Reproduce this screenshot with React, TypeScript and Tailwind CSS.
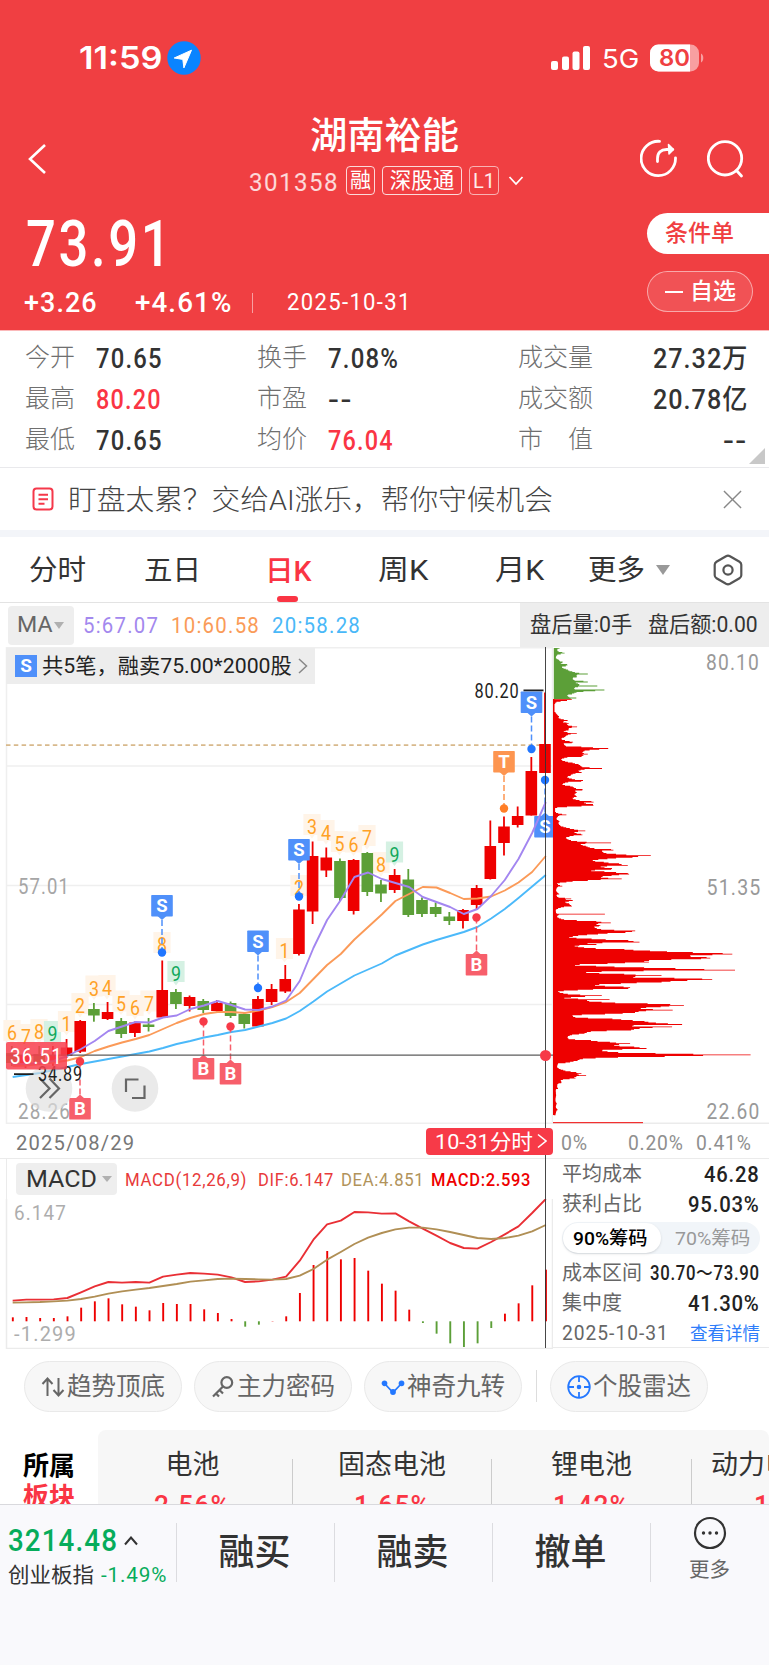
import { useLayoutEffect, useRef, useState } from "react";
import type { ReactNode } from "react";
import clsx from "clsx";

const FONT = "font-['Roboto','Noto_Sans_CJK_SC',sans-serif]";

const RED = "#ee0000";
const GREEN = "#5c9f38";

// [wick top, wick bottom, body top, body bottom, up?]
const candles: [number, number, number, number, boolean][] = [
  [1046, 1066, 1053, 1063, false],
  [1048, 1068, 1055, 1065, true],
  [1046, 1064, 1054, 1062, false],
  [1046, 1066, 1055, 1062, true],
  [1039, 1058, 1047.5, 1056, true],
  [1020, 1053, 1021, 1051.7, true],
  [1003, 1021.7, 1009, 1015.5, false],
  [1002, 1020, 1012, 1019, true],
  [1018, 1038, 1021, 1034, false],
  [1021.5, 1037, 1022.5, 1033, true],
  [1018, 1031.5, 1024.5, 1027, false],
  [960.5, 1017.5, 990, 1017.5, true],
  [989, 1009, 992, 1004, false],
  [995.5, 1011.5, 997, 1006, true],
  [999, 1013, 1001, 1010, false],
  [1000, 1011.5, 1003, 1011, true],
  [1001.5, 1018, 1003, 1016, false],
  [1012.5, 1028.5, 1014, 1024, false],
  [996, 1027, 999, 1026.5, true],
  [984, 1005, 989, 1002, true],
  [965, 993, 979, 991.5, true],
  [904, 955.5, 909.5, 954, true],
  [841.5, 924, 856, 911.5, true],
  [847.5, 877, 857.5, 870.5, true],
  [858.5, 901, 861, 898, false],
  [859, 914.5, 860, 911, true],
  [852, 896, 853, 892, false],
  [880, 902, 884.5, 893.5, false],
  [869, 893, 875, 890, true],
  [869, 917, 879.5, 915, false],
  [897.5, 917, 900, 914, false],
  [902.5, 917, 907, 914, false],
  [912, 925, 916.5, 921, false],
  [909, 928.5, 910, 921, true],
  [885, 909, 888, 905, true],
  [820.5, 879.5, 846, 879, true],
  [816.5, 855.5, 826.5, 843, true],
  [806.5, 827.5, 816, 825, true],
  [757, 815.5, 771, 815.5, true],
  [692.5, 773, 744, 773, true],
];

const ma5 = [
  1064, 1064, 1063, 1061, 1056, 1049, 1041, 1031, 1026.5, 1022, 1022.5, 1017.5, 1015.5, 1009,
  1005.5, 1001, 1005, 1009.5, 1010, 1006.5, 1000.5, 981, 948, 920, 900, 877, 872.5, 879, 883, 887,
  897, 902, 907, 914, 909, 896, 880, 859, 833, 802,
];
const ma10 = [
  1066, 1065.5, 1064, 1062.5, 1060.5, 1057, 1051, 1046.5, 1042.5, 1039, 1035, 1029, 1023, 1018,
  1014, 1012, 1012, 1013, 1010.5, 1007, 1002, 993, 979, 965, 954, 939.5, 927, 914.5, 901, 894, 887,
  887.5, 893, 899, 898.5, 896.5, 890.5, 882.5, 872, 856,
];
const ma20 = [
  1077, 1075, 1073, 1070, 1067, 1064, 1061.5, 1059, 1056.5, 1054, 1051.5, 1048, 1044, 1041, 1037.5,
  1035, 1032, 1030, 1026.5, 1023, 1018.5, 1011, 1001.5, 991.5, 983.5, 975.5, 969.5, 963.5, 955.5,
  950, 944.5, 940, 936, 932, 927, 918.5, 909, 898, 886.5, 875,
];

// Nine-turn counters: [x, y, digit]
const counters: [number, number, string][] = [
  [12, 1033, "6"],
  [26, 1037, "7"],
  [39, 1032, "8"],
  [52.5, 1034, "9"],
  [66.5, 1024, "1"],
  [80, 1006, "2"],
  [94, 988.5, "3"],
  [107, 988, "4"],
  [121, 1003.5, "5"],
  [135, 1008, "6"],
  [149, 1003.5, "7"],
  [162, 945, "8"],
  [176, 974, "9"],
  [284.5, 951, "1"],
  [299, 888, "2"],
  [312, 827, "3"],
  [326, 833, "4"],
  [339.5, 844, "5"],
  [353.5, 844.5, "6"],
  [367, 838, "7"],
  [381, 865, "8"],
  [394.5, 854.5, "9"],
];

type Trade = { x: number; top: number; dot: number; label: "S" | "B" | "T"; up?: boolean };

const trades: Trade[] = [
  { x: 162, top: 895, dot: 952.5, label: "S" },
  { x: 258, top: 930.5, dot: 988, label: "S" },
  { x: 299, top: 839, dot: 896.5, label: "S" },
  { x: 531.5, top: 691.5, dot: 749, label: "S" },
  { x: 504, top: 751, dot: 808.5, label: "T" },
  { x: 545, top: 816, dot: 780, label: "S", up: true },
  { x: 80, top: 1098, dot: 1061.5, label: "B", up: true },
  { x: 203.5, top: 1058, dot: 1021.5, label: "B", up: true },
  { x: 230.5, top: 1063, dot: 1026.5, label: "B", up: true },
  { x: 476.5, top: 954, dot: 917.5, label: "B", up: true },
];

const tradeColors = {
  S: ["#4f90fa", "#2176ff"],
  T: ["#fd9550", "#ff7e26"],
  B: ["#f75f6b", "#f73a48"],
};

// Chip distribution, alternating y and bar length in thirds of a pixel
const chipsGreen = [
  24, 17, 28, 10, 32, 12, 37, 32, 40, 34, 42, 12, 52, 6, 58, 15, 62, 18, 66, 34, 69, 20, 72, 40, 76, 42,
  80, 24, 88, 42, 95, 62, 98, 72, 100, 147, 102, 72, 106, 68, 110, 71, 114, 56, 120, 62, 124, 129,
  127, 66, 131, 80, 134, 74, 137, 138, 140, 66, 146, 60, 149, 164, 152, 120, 156, 68, 160, 60, 165,
  40, 170, 46, 174, 87, 177, 26,
];
const chipsRed = [
  178, 54, 182, 36, 184, 10, 190, 4, 191, 0, 214, 0, 216, 5, 222, 10, 228, 16, 232, 14, 238, 30, 241,
  47, 244, 26, 249, 48, 253, 40, 258, 60, 260, 75, 264, 45, 270, 44, 274, 30, 279, 72, 283, 44, 290,
  34, 296, 22, 304, 56, 307, 66, 310, 30, 317, 36, 320, 96, 324, 171, 327, 136, 332, 92, 337, 86, 341,
  104, 344, 86, 348, 96, 351, 40, 358, 22, 364, 40, 368, 60, 373, 78, 380, 86, 384, 160, 387, 92,
  392, 74, 397, 86, 400, 60, 406, 50, 410, 40, 416, 56, 422, 111, 425, 44, 432, 26, 438, 56, 444,
  66, 448, 105, 452, 64, 457, 70, 462, 62, 468, 70, 474, 56, 480, 76, 484, 146, 488, 90, 494, 138,
  498, 80, 501, 26, 503, 4, 514, 4, 519, 14, 523, 46, 527, 14, 536, 8, 542, 18, 548, 14, 556, 20, 561,
  36, 566, 60, 572, 99, 576, 62, 583, 96, 587, 56, 592, 36, 598, 44, 603, 72, 608, 188, 611, 80,
  618, 100, 623, 112, 628, 210, 632, 144, 637, 150, 642, 200, 646, 291, 651, 236, 656, 160, 661,
  116, 665, 150, 670, 196, 675, 224, 679, 140, 686, 195, 691, 110, 695, 180, 700, 249, 705, 190,
  710, 140, 716, 212, 720, 112, 725, 40, 730, 10, 737, 27, 741, 10, 750, 7, 761, 17, 765, 8, 770,
  12, 775, 60, 778, 36, 781, 67, 785, 34, 790, 46, 797, 57, 802, 21, 809, 6, 818, 7, 820, 15, 821,
  182, 823, 16, 829, 10, 838, 31, 842, 126, 848, 177, 851, 126, 856, 148, 860, 121, 865, 131, 872,
  257, 876, 226, 882, 130, 887, 70, 891, 46, 895, 111, 900, 223, 905, 269, 910, 101, 913, 141, 916,
  61, 922, 91, 927, 221, 933, 330, 938, 504, 942, 551, 947, 401, 952, 495, 956, 441, 962, 270, 966,
  293, 970, 161, 974, 58, 978, 161, 982, 271, 985, 411, 989, 581, 992, 261, 996, 96, 1001, 211, 1006,
  323, 1010, 226, 1013, 361, 1017, 544, 1020, 411, 1026, 321, 1030, 201, 1034, 121, 1040, 221, 1044,
  249, 1048, 101, 1054, 13, 1060, 36, 1066, 144, 1069, 91, 1073, 31, 1078, 167, 1081, 96, 1086, 161,
  1091, 341, 1095, 395, 1100, 320, 1104, 260, 1109, 366, 1113, 261, 1118, 241, 1121, 161, 1126, 56,
  1130, 61, 1136, 191, 1142, 271, 1148, 311, 1152, 420, 1156, 216, 1160, 384, 1164, 261, 1170, 231,
  1174, 111, 1180, 91, 1185, 51, 1190, 41, 1196, 45, 1200, 111, 1205, 168, 1210, 229, 1215, 181,
  1220, 251, 1225, 285, 1230, 141, 1235, 171, 1240, 391, 1244, 632, 1249, 326, 1252, 161, 1256, 86,
  1261, 71, 1267, 46, 1270, 13, 1280, 10, 1290, 31, 1295, 60, 1298, 89, 1302, 70, 1306, 97, 1310, 61,
  1314, 67, 1320, 21, 1327, 25, 1332, 11, 1340, 10, 1344, 14, 1348, 6, 1366, 7, 1380, 5, 1390, 9, 1400, 6,
  1408, 13, 1412, 8, 1426, 5,
];

const macdBars = [
  499, 498, 501, 501, 496, 470, 451, 442, 460, 467, 478, 456, 459, 459, 475, 486, 504, 527, 521, 510,
  496, 426, 342, 300, 325, 321, 359, 398, 419, 476, 516, 548, 577, 588, 577, 531, 488, 457, 403, 356,
];
const dif = [
  449, 446, 446, 445, 441, 424, 406, 393, 395, 393, 395, 377, 371, 366, 368, 371, 379, 393, 391, 386,
  377, 329, 266, 220, 209, 183, 184, 188, 187, 211, 233, 254, 276, 291, 293, 273, 250, 226, 186, 144,
];
const dea = [
  455, 454, 453, 451, 449, 444, 437, 428, 421, 416, 411, 405, 399, 392, 388, 384, 383, 384, 385, 386,
  384, 374, 354, 326, 303, 279, 260, 246, 235, 230, 230, 235, 243, 252, 261, 264, 261, 254, 241, 222,
];

const barX = (i: number) => 545 - 13.67 * (39 - i);
const macdY = (v: number) => 1150 + v / 3;
const toPoints = (ys: number[]) => ys.map((y, i) => `${barX(i) + 0.8},${y}`).join(" ");

// Stepped outline with one price level every 0.8px; long levels stay thin
function chipPath(flat: number[]) {
  const last = flat[flat.length - 2];
  let d = `M0.8 ${640 + flat[0] / 3}`;
  let k = 0;
  for (let y = flat[0]; y < last; y += 2.4) {
    while (flat[k + 2] < y) k += 2;
    const [y0, v0, y1, v1] = flat.slice(k, k + 4);
    const t = (y - y0) / (y1 - y0);
    const near = v1 > v0 ? t : 1 - t;
    const length = Math.min(v0, v1) + Math.abs(v1 - v0) * near ** 1.8;
    d += `H${(0.8 + length / 3).toFixed(1)}V${(640 + (y + 2.4) / 3).toFixed(1)}`;
  }
  return `${d}H0.8z`;
}

// Stretches or squeezes its text horizontally so that it fills the given width
function Fit({ className, children }: { className: string; children: ReactNode }) {
  const box = useRef<HTMLSpanElement>(null);
  const text = useRef<HTMLSpanElement>(null);
  const [scale, setScale] = useState(1);

  useLayoutEffect(() => {
    if (box.current && text.current) {
      setScale(box.current.clientWidth / text.current.offsetWidth);
    }
  }, []);

  return (
    <span ref={box} className={clsx("block shrink-0 whitespace-nowrap", className)}>
      <span
        ref={text}
        className="inline-block origin-left"
        style={{ transform: `scaleX(${scale})` }}
      >
        {children}
      </span>
    </span>
  );
}

function StatusBar() {
  return (
    <div className="flex h-[115px] items-center pl-[79px]">
      <Fit className="w-[83px] font-['Inter'] text-[31px] leading-10 font-semibold">11:59</Fit>
      <svg className="ml-[5px] size-[34px]" viewBox="0 0 34 34">
        <circle cx="17" cy="17" r="16.7" fill="#0a84ff" />
        <path d="M24.5 9.2 7.2 17l8.6 1.4 1.1 8.5z" fill="#fff" stroke="#fff" strokeLinejoin="round" />
      </svg>
      <svg className="ml-[350px] h-6 w-10" viewBox="0 0 40 24" fill="#fff">
        <rect x="0" y="15" width="7" height="9" rx="2" />
        <rect x="11" y="10.5" width="7" height="13.5" rx="2" />
        <rect x="21.5" y="5.5" width="7" height="18.5" rx="2" />
        <rect x="32" y="0" width="7" height="24" rx="2" />
      </svg>
      <Fit className="ml-[11px] w-[37px] pt-[2px] font-['Inter'] text-[26px] leading-10">5G</Fit>
      <svg className="ml-[11px] h-[28px] w-[54px]" viewBox="0 0 54 28">
        <rect x="0" y=".5" width="49" height="27" rx="8.5" fill="#fff" fillOpacity=".5" />
        <path d="M8.5.5H40v27H8.5A8.5 8.5 0 0 1 0 19V9A8.5 8.5 0 0 1 8.5.5z" fill="#fff" />
        <path d="M51 9.500c3 1 3 8 0 9z" fill="#fff" fillOpacity=".5" />
        <text
          x="9"
          y="22"
          textLength="31"
          lengthAdjust="spacingAndGlyphs"
          className="font-['Inter'] text-[22.500px] font-semibold"
          fill="#ef4042"
        >
          80
        </text>
      </svg>
    </div>
  );
}

function Header() {
  return (
    <header className="h-[331px] border-b border-[#fbb9ba] bg-[#f03f42] text-white">
      <StatusBar />
      <div className="flex h-[88px] items-start">
        <svg className="mt-7 ml-[27px] h-8 w-5" viewBox="0 0 20 32" fill="none" stroke="#fff" strokeWidth="2.600">
          <path d="M18 2 3 16l15 14" />
        </svg>
        <div className="ml-[202px] w-[276px] pt-px">
          <Fit className="ml-[61px] w-[149px] text-[37px] leading-[42px] font-medium">湖南裕能</Fit>
          <div className="mt-[8px] flex h-[29px] items-center">
            <Fit className="w-[90px] pt-[2px] text-[26.500px] leading-7 tracking-[.06em] text-white/80">301358</Fit>
            <div className="ml-[7px] flex h-[29px] w-[29px] items-center justify-center rounded border border-white/80 pt-px text-[21px]">
              融
            </div>
            <div className="ml-[7px] flex h-[29px] w-[80px] items-center justify-center rounded border border-white/80 pt-px text-[21.500px]">
              深股通
            </div>
            <div className="ml-[7px] flex h-[29px] w-[30px] items-center justify-center rounded border border-white/60 text-[20px] text-white/90">
              L1
            </div>
            <svg className="ml-[9px] h-3 w-4" viewBox="0 0 16 12" fill="none" stroke="#fff" strokeWidth="1.800">
              <path d="m1.500 2 6.500 7 6.500-7" />
            </svg>
          </div>
        </div>
        <svg className="mt-[24px] ml-[115px] size-10" viewBox="0 0 40 40" fill="none" stroke="#fff" strokeWidth="2.800">
          <path d="M19.500 2.300A17.200 17.200 0 1 0 35.500 18.800" strokeLinecap="round" />
          <path d="M17.500 22.500v-3c0-6 3.500-9 9-9h6" strokeLinecap="round" />
          <path d="m28.500 5.500 5 5-4.500 4.500z" fill="#fff" strokeWidth="1.500" strokeLinejoin="round" />
        </svg>
        <svg className="mt-[25px] ml-[27px] size-10" viewBox="0 0 40 40" fill="none" stroke="#fff" strokeWidth="2.800">
          <circle cx="18" cy="18.300" r="16.700" />
          <path d="m29.500 30.500 5 5.500" strokeLinecap="round" />
        </svg>
      </div>
      <div className="flex justify-between">
        <div>
          <Fit className="mt-[8px] ml-[26px] w-[147px] text-[64px] leading-[68px] font-medium tracking-[.05em]">73.91</Fit>
          <div className="mt-[9px] flex h-[30px] items-center">
            <Fit className="ml-[24px] w-[74px] text-[28px] font-medium tracking-[.04em]">+3.26</Fit>
            <Fit className="ml-[37px] w-[97px] text-[28px] font-medium tracking-[.04em]">+4.61%</Fit>
            <div className="ml-[20px] h-5 w-px bg-white/50" />
            <Fit className="ml-[34px] w-[125px] text-[23.500px] tracking-[.06em]">2025-10-31</Fit>
          </div>
        </div>
        <div className="mt-[10px] w-[122px]">
          <div className="flex h-[41px] items-center rounded-l-full bg-white pt-[2px] pl-[18px] text-[23px] font-medium text-[#f03f42]">
            条件单
          </div>
          <div className="mt-[17px] flex h-[41px] w-[106px] items-center rounded-full border border-white/50 bg-white/10 pt-px pl-[17px] text-[23px] font-medium">
            <div className="mr-[7px] h-[2px] w-[18px] bg-white" />
            自选
          </div>
        </div>
      </div>
    </header>
  );
}

function Stats() {
  return (
    <section className="relative flex h-[137px] border-b border-[#e9e9ec] pt-[6px] text-[27px] leading-[41px] font-medium text-[#333]">
      <div className="ml-[25px] w-[71px] text-[25px] font-light text-[#6f6f6f]">
        <div>今开</div>
        <div>最高</div>
        <div>最低</div>
      </div>
      <div className="mt-[2px] tracking-[.05em]">
        <Fit className="w-[67px]">70.65</Fit>
        <Fit className="w-[66px] text-[#fa3544]">80.20</Fit>
        <Fit className="w-[67px]">70.65</Fit>
      </div>
      <div className="ml-[94px] w-[71px] text-[25px] font-light text-[#6f6f6f]">
        <div>换手</div>
        <div>市盈</div>
        <div>均价</div>
      </div>
      <div className="mt-[2px] tracking-[.05em]">
        <Fit className="w-[71px]">7.08%</Fit>
        <Fit className="w-[25px]">--</Fit>
        <Fit className="w-[66px] text-[#fa3544]">76.04</Fit>
      </div>
      <div className="ml-[119px] w-[135px] text-[25px] font-light text-[#6f6f6f]">
        <div>成交量</div>
        <div>成交额</div>
        <div className="flex w-[75px] justify-between">
          <span>市</span>
          <span>值</span>
        </div>
      </div>
      <div className="mt-[2px] flex flex-col items-end tracking-[.04em]">
        <Fit className="w-[95px]">27.32万</Fit>
        <Fit className="w-[95px]">20.78亿</Fit>
        <Fit className="w-[25px]">--</Fit>
      </div>
      <svg className="absolute right-1 bottom-[3px] size-4" viewBox="0 0 16 16">
        <path d="M16 0v16H0z" fill="#c8c8c8" />
      </svg>
    </section>
  );
}

function Notice() {
  return (
    <div className="flex h-[69px] items-center border-b-[7px] border-[#f3f5f9]">
      <svg className="ml-[32px] h-6 w-[23px]" viewBox="0 0 23 24" fill="none" stroke="#f5384a" strokeWidth="2">
        <rect x="1.500" y="1.500" width="19" height="21" rx="3" />
        <path d="M6.500 7.800h9.500M6.500 12.300h9.500M6.500 16.800h6" />
      </svg>
      <Fit className="ml-[13px] w-[485px] pt-[4px] text-[28px] font-light text-[#444]">
        盯盘太累？交给AI涨乐，帮你守候机会
      </Fit>
      <svg className="ml-[170px] size-[19px]" viewBox="0 0 20 20" fill="none" stroke="#888" strokeWidth="1.500">
        <path d="m1 1 18 18M19 1 1 19" />
      </svg>
    </div>
  );
}

function Tabs() {
  return (
    <nav className="flex h-[66px] items-center border-b border-[#e3e3e3] text-[28.500px] text-[#333]">
      <span className="ml-[29px] w-[115px] pt-[4px]">分时</span>
      <span className="w-[121px] pt-[4px]">五日</span>
      <div className="flex h-full w-[113px] flex-col pt-[13px] font-medium text-[#fa3544]">
        <Fit className="w-[47px] leading-[43px]">日K</Fit>
        <div className="mt-[3px] ml-[12px] h-[6px] w-[21px] rounded-full bg-[#fa3544]" />
      </div>
      <Fit className="w-[50px] pt-[4px]">周K</Fit>
      <Fit className="ml-[67px] w-[49px] pt-[4px]">月K</Fit>
      <span className="ml-[44px] pt-[4px]">更多</span>
      <svg className="ml-[11px] h-[10px] w-[14px]" viewBox="0 0 14 10">
        <path d="M0 0h14L7 10z" fill="#999" />
      </svg>
      <svg className="ml-[43px] h-8 w-[30px]" viewBox="0 0 30 32" fill="none" stroke="#555" strokeWidth="2.200">
        <path d="M13 2.200q2-1.100 4 0l9.500 5.600q1.800 1.100 1.800 3v10.400q0 1.900-1.800 3L17 29.800q-2 1.100-4 0l-9.500-5.600q-1.800-1.100-1.800-3V10.800q0-1.900 1.800-3z" />
        <circle cx="15" cy="16" r="4.600" />
      </svg>
    </nav>
  );
}

function MaRow() {
  return (
    <div className="flex h-[44px] items-center text-[22.500px]">
      <div className="ml-[8px] flex h-[39px] w-[66px] items-center rounded bg-[#eee] text-[#666]">
        <Fit className="ml-[9px] w-[36px]">MA</Fit>
        <svg className="ml-px h-[7px] w-[10px]" viewBox="0 0 10 7">
          <path d="M0 0h10L5 7z" fill="#b0b0b0" />
        </svg>
      </div>
      <Fit className="ml-[9px] w-[76px] pt-[2px] tracking-[.06em] text-[#a388ee]">5:67.07</Fit>
      <Fit className="ml-[12px] w-[89px] pt-[2px] tracking-[.06em] text-[#fa9b58]">10:60.58</Fit>
      <Fit className="ml-[12px] w-[89px] pt-[2px] tracking-[.06em] text-[#49b8f8]">20:58.28</Fit>
      <div className="ml-auto flex h-full w-[249px] items-center bg-[#ededed] text-[21.500px] text-[#333]">
        <Fit className="ml-[10px] w-[102px]">盘后量:0手</Fit>
        <Fit className="ml-[16px] w-[110px]">盘后额:0.00</Fit>
      </div>
    </div>
  );
}

function TradeMark({ x, top, dot, label, up }: Trade) {
  const [fill, dotFill] = tradeColors[label];
  const tip = up ? top - 3.5 : top + 25;
  const edge = up ? top + 0.5 : top + 21;
  return (
    <g>
      <line x1={x} x2={x} y1={tip} y2={dot} stroke={fill} strokeWidth="1.500" strokeDasharray="6 3" />
      <circle cx={x} cy={dot} r="4.200" fill={dotFill} />
      <rect x={x - 10.8} y={top} width="21.600" height="21.500" rx=".8" fill={fill} />
      <path d={`M${x - 4.5} ${edge}H${x + 4.5}L${x} ${tip}z`} fill={fill} />
      <text x={x} y={top + 17.3} textAnchor="middle" fill="#fff" className="text-[18.500px] font-bold">
        {label}
      </text>
    </g>
  );
}

function CandleChart() {
  return (
    <svg className="block h-[477px] w-[553px]" viewBox="0 647 553 477">
      <g stroke="#efefef" strokeWidth="1.500">
        <path d="M6 647.700H553M6 766H553M6 885.500H553M6 1004.500H553M6 1123.300H553M6.500 647V1124M552.500 647V1124" />
      </g>
      <path d="M6 745.200H550" stroke="#d8b98c" strokeWidth="1.800" strokeDasharray="4.500 3.300" />
      <g fill="#a6a6a6" className="text-[21.500px] tracking-[.06em]">
        <text x="18" y="893.500" textLength="52" lengthAdjust="spacingAndGlyphs">57.01</text>
        <text x="18" y="1118.500" textLength="53" lengthAdjust="spacingAndGlyphs">28.26</text>
      </g>
      {counters.map(([x, y, digit]) => (
        <g key={x}>
          <path
            d={`M${x - 8.6} ${y - 13}h17.2v21h-6l-2.6 3.5-2.6-3.5h-6z`}
            fill={digit === "9" ? "#d5f1e3" : "#fff4e8"}
          />
          <text
            x={x - 5}
            y={y + 7.3}
            textLength="10"
            lengthAdjust="spacingAndGlyphs"
            fill={digit === "9" ? "#11a85c" : "#ffa125"}
            className="text-[20.500px]"
          >
            {digit}
          </text>
        </g>
      ))}
      {candles.map(([high, low, top, bottom, up], i) => (
        <g key={i} fill={up ? RED : GREEN}>
          <rect x={barX(i) - 0.9} y={high} width="1.800" height={low - high} />
          <rect x={barX(i) - 5.8} y={top} width="11.600" height={bottom - top} />
        </g>
      ))}
      <g fill="none" strokeWidth="1.900" strokeLinejoin="round">
        <polyline points={toPoints(ma20)} stroke="#4bb9fa" />
        <polyline points={toPoints(ma10)} stroke="#fb9a58" />
      </g>
      {trades.map((trade) => (
        <TradeMark key={trade.x} {...trade} />
      ))}
      <polyline points={toPoints(ma5)} stroke="#a386f0" strokeWidth="1.900" fill="none" strokeLinejoin="round" />
      <g fill="#dedede" fillOpacity=".65">
        <circle cx="49" cy="1088.500" r="23.300" />
        <circle cx="135" cy="1088.500" r="23.300" />
      </g>
      <g fill="none" stroke="#666" strokeWidth="2.200">
        <path d="m40 1078.500 9.500 10-9.500 9.500M49.500 1078.500l9.500 10-9.500 9.500" />
        <path d="M126 1092v-12.500h12.500M144.500 1085.500V1098H132" />
      </g>
      <g fill="#1f1f1f" className="text-[19.500px] tracking-[.05em]">
        <text x="474.500" y="697.500" textLength="45" lengthAdjust="spacingAndGlyphs">80.20</text>
        <text x="38" y="1081" textLength="45" lengthAdjust="spacingAndGlyphs">34.89</text>
        <path d="M523.500 689.500h20v1.800h-20zM14 1073.300h19.500v1.800H14z" />
      </g>
      <path d="M6 1055.200H553" stroke="#5c5c5c" strokeWidth="1.300" />
      <rect x="6" y="1042" width="61" height="27.500" rx="2" fill="#f8404e" fillOpacity=".86" />
      <text
        x="10"
        y="1063.500"
        textLength="53"
        lengthAdjust="spacingAndGlyphs"
        fill="#fff"
        className="text-[21.500px] tracking-[.06em]"
      >
        36.51
      </text>
    </svg>
  );
}

function TradeBanner() {
  return (
    <div className="absolute top-px left-[6px] flex h-[36px] w-[309px] items-center bg-[#ededed]">
      <div className="ml-[9px] flex size-[22px] items-center justify-center bg-[#4f90fa] text-[19px] font-bold text-white">
        S
      </div>
      <Fit className="ml-[5px] w-[250px] pt-[2px] text-[21px] text-[#222]">共5笔，融卖75.00*2000股</Fit>
      <svg className="ml-[6px] h-4 w-[10px]" viewBox="0 0 10 16" fill="none" stroke="#888" strokeWidth="1.500">
        <path d="m1 1 7.500 7L1 15" />
      </svg>
    </div>
  );
}

function MacdPanel() {
  return (
    <div className="h-[190px] w-[553px]">
      <div className="ml-[6px] flex h-[40px] items-center border-l border-[#ebebeb] text-[18.500px]">
        <div className="ml-[9px] flex h-[32px] w-[101px] items-center rounded bg-[#eee] text-[24px] text-[#333]">
          <Fit className="ml-[10px] w-[71px]">MACD</Fit>
          <svg className="ml-[5px] h-[6px] w-[10px]" viewBox="0 0 10 6">
            <path d="M0 0h10L5 6z" fill="#b0b0b0" />
          </svg>
        </div>
        <Fit className="ml-[8px] w-[122px] pt-[3px] tracking-[.04em] text-[#e83a3a]">MACD(12,26,9)</Fit>
        <Fit className="ml-[11px] w-[76px] pt-[3px] tracking-[.04em] text-[#e83a3a]">DIF:6.147</Fit>
        <Fit className="ml-[7px] w-[83px] pt-[3px] tracking-[.04em] text-[#b1935a]">DEA:4.851</Fit>
        <Fit className="ml-[7px] w-[100px] pt-[3px] font-medium tracking-[.04em] text-[#ee0000]">MACD:2.593</Fit>
      </div>
      <svg className="block h-[150px] w-[553px]" viewBox="0 1198 553 150">
        <path d="M6.500 1158V1347.500H553M552.500 1158V1348" fill="none" stroke="#ebebeb" strokeWidth="1.500" />
        <g fill="#adadad" className="text-[21px] tracking-[.06em]">
          <text x="14" y="1219.200" textLength="53" lengthAdjust="spacingAndGlyphs">6.147</text>
          <text x="14" y="1340" textLength="63" lengthAdjust="spacingAndGlyphs">-1.299</text>
        </g>
        {macdBars.map((v, i) => (
          <rect
            key={i}
            x={barX(i)}
            y={Math.min(macdY(v), 1320.3)}
            width="1.900"
            height={Math.abs(macdY(v) - 1320.3)}
            fill={v > 511 ? GREEN : RED}
          />
        ))}
        <g fill="none" strokeWidth="1.900" strokeLinejoin="round">
          <polyline points={toPoints(dif.map(macdY))} stroke="#e92f35" />
          <polyline points={toPoints(dea.map(macdY))} stroke="#b08f55" />
        </g>
      </svg>
    </div>
  );
}

function ChipPanel() {
  return (
    <div className="w-[216px]">
      <svg className="block h-[477px] w-[216px]" viewBox="0 647 216 477">
        <path d="M0 1123.300H216M0 885.500H1" stroke="#ebebeb" strokeWidth="1.500" />
        <path d={chipPath(chipsGreen)} fill={GREEN} />
        <path d={chipPath(chipsRed)} fill={RED} />
        <rect x="0" y="699" width="1.500" height="416" fill={RED} />
        <rect x="0" y="1122" width="90" height="1.200" fill="#f23030" />
        <g fill="#999" className="text-[21.500px] tracking-[.06em]">
          <text x="153" y="669.500" textLength="54" lengthAdjust="spacingAndGlyphs">80.10</text>
          <text x="153.500" y="894.500" textLength="55" lengthAdjust="spacingAndGlyphs">51.35</text>
          <text x="153.500" y="1119" textLength="54" lengthAdjust="spacingAndGlyphs">22.60</text>
        </g>
      </svg>
      <div className="flex h-[35px] items-center border-b border-[#ebebeb] pt-[5px] text-[21px] tracking-[.04em] text-[#8f8f8f]">
        <Fit className="ml-[8px] w-[27px]">0%</Fit>
        <Fit className="ml-[40px] w-[56px]">0.20%</Fit>
        <Fit className="ml-[12px] w-[56px]">0.41%</Fit>
      </div>
      <div className="h-[189px] border-b border-[#ebebeb] pr-[9px] pl-[9px] text-[20px] text-[#666]">
        <div className="flex h-[30px] items-center justify-between">
          平均成本
          <Fit className="w-[56px] pt-px text-[22px] font-medium tracking-[.04em] text-[#222]">46.28</Fit>
        </div>
        <div className="flex h-[29px] items-center justify-between">
          获利占比
          <Fit className="w-[72px] pt-[2px] text-[22px] font-medium tracking-[.04em] text-[#222]">95.03%</Fit>
        </div>
        <div className="mt-[4px] flex h-[32px] items-center rounded-full bg-[#f1f5f9] p-px">
          <div className="flex h-[30px] w-[98px] items-center rounded-full bg-white pt-[2px] pl-[10px] text-black shadow-sm">
            <Fit className="w-[75px] text-[19px] font-medium">90%筹码</Fit>
          </div>
          <Fit className="ml-[14px] w-[75px] pt-[2px] text-[19px] text-[#999]">70%筹码</Fit>
        </div>
        <div className="mt-[4px] flex h-[30px] items-center justify-between">
          成本区间
          <Fit className="w-[110px] pt-[2px] text-[19.500px] font-medium tracking-[.04em] text-[#222]">30.70～73.90</Fit>
        </div>
        <div className="flex h-[29px] items-center justify-between">
          集中度
          <Fit className="w-[72px] pt-[2px] text-[22px] font-medium tracking-[.04em] text-[#222]">41.30%</Fit>
        </div>
        <div className="flex h-[31px] items-center justify-between pt-[2px]">
          <Fit className="w-[107px] text-[20.500px] tracking-[.05em]">2025-10-31</Fit>
          <Fit className="w-[70px] text-[18px] text-[#2e7dfa]">查看详情</Fit>
        </div>
      </div>
    </div>
  );
}

function ChartArea() {
  return (
    <section className="relative flex">
      <div className="w-[553px]">
        <CandleChart />
        <div className="flex h-[35px] items-center justify-between border-b border-[#ebebeb]">
          <Fit className="ml-[16px] w-[119px] pt-[5px] text-[21px] tracking-[.06em] text-[#777]">2025/08/29</Fit>
          <div className="z-10 flex h-[27px] w-[127px] items-center rounded bg-[#f73a48] text-white">
            <Fit className="ml-[9px] w-[98px] pt-[3px] text-[21px]">10-31分时</Fit>
            <svg className="ml-[4px] h-4 w-[10px]" viewBox="0 0 10 16" fill="none" stroke="#fff" strokeWidth="1.600">
              <path d="m1 1.500 8 6.500-8 6.500" />
            </svg>
          </div>
        </div>
        <MacdPanel />
      </div>
      <ChipPanel />
      <TradeBanner />
      <div className="absolute top-0 left-[545px] h-[701px] w-px bg-[#333]/90" />
      <div className="absolute top-[403px] left-[540px] size-[11px] rounded-full bg-[#f73a48]" />
    </section>
  );
}

function Pill({ icon, label, className }: { icon: ReactNode; label: string; className?: string }) {
  return (
    <div
      className={clsx(
        "flex h-[51px] w-[158px] shrink-0 items-center rounded-full border border-[#e9e9e9] bg-[#f7f7f7] pl-[16px] text-[24.500px] text-[#666]",
        className,
      )}
    >
      {icon}
      <span className="ml-[2px] pt-px whitespace-nowrap">{label}</span>
    </div>
  );
}

function Pills() {
  return (
    <section className="flex h-[81px] items-start pt-[12px] pl-[24px]">
      <Pill
        label="趋势顶底"
        icon={
          <svg className="size-[24px]" viewBox="0 0 24 24" fill="none" stroke="#666" strokeWidth="2">
            <path d="M6.500 21V4M1.500 9l5-5.500 5 5.500M17.500 3v17M12.500 15l5 5.500 5-5.500" />
          </svg>
        }
      />
      <Pill
        className="ml-[12px]"
        label="主力密码"
        icon={
          <svg className="size-[24px]" viewBox="0 0 24 24" fill="none" stroke="#666" strokeWidth="2.200">
            <circle cx="15.800" cy="7.500" r="5.400" />
            <path d="M12 11.500 2 21.500M8.500 15l3.500 3.500M5 18.500l3 3" />
          </svg>
        }
      />
      <Pill
        className="ml-[12px]"
        label="神奇九转"
        icon={
          <svg className="size-[24px]" viewBox="0 0 24 24" fill="#2478ff" stroke="#2478ff" strokeWidth="1.800">
            <path d="M3.500 8.500 12 17.500l8.500-9" fill="none" />
            <circle cx="3.500" cy="8.300" r="2" />
            <circle cx="20.500" cy="8.300" r="2" />
            <circle cx="12" cy="17" r="2" />
          </svg>
        }
      />
      <div className="mt-[9px] ml-[14px] h-8 w-px bg-[#ddd]" />
      <Pill
        className="ml-[13px]"
        label="个股雷达"
        icon={
          <svg className="size-[24px]" viewBox="0 0 24 24" fill="none" stroke="#2478ff" strokeWidth="1.800">
            <circle cx="12" cy="12" r="10.800" />
            <path d="M12 1v6M12 17v6M1 12h6M17 12h6" />
            <circle cx="12" cy="12" r="1.400" fill="#2478ff" />
          </svg>
        }
      />
    </section>
  );
}

const sectors = [
  { name: "电池", change: "2.56%", width: "w-[194px] pr-[5px]" },
  { name: "固态电池", change: "1.65%", width: "w-[198px]" },
  { name: "锂电池", change: "1.42%", width: "w-[199px]" },
  { name: "动力电池回收", change: "1.19%", width: "w-[200px]" },
];

function Sectors() {
  return (
    <section className="flex h-[74px] overflow-hidden">
      <div className="w-[98px] shrink-0 pt-[21px] pl-[23px] text-[26px] leading-[31px] font-bold text-black">
        所属
        <div className="text-[#fa3544]">板块</div>
      </div>
      <div className="flex w-[671px] shrink-0 overflow-hidden rounded-t-lg bg-[#f7f7f7]">
        {sectors.map(({ name, change, width }, i) => (
          <div key={name} className="flex shrink-0">
            <div className={clsx("flex flex-col items-center pt-[16px]", width)}>
              <div className="text-[27px] leading-[38px] whitespace-nowrap text-[#333]">{name}</div>
              <Fit className="mt-[5px] w-[77px] text-[27px] leading-[34px] font-medium tracking-[.04em] text-[#fa3544]">
                {change}
              </Fit>
            </div>
            {i < 3 && <div className="mt-[29px] h-[60px] w-px bg-[#ccc]" />}
          </div>
        ))}
      </div>
    </section>
  );
}

function BottomBar() {
  return (
    <footer className="flex h-[162px] items-start border-t border-[#d9d9dd] bg-[#f9f9fc] text-[#333]">
      <div className="w-[176px] pt-[15px] pl-[8px]">
        <div className="flex h-[42px] items-center">
          <Fit className="w-[110px] text-[31px] font-medium tracking-[.04em] text-[#06ac5b]">3214.48</Fit>
          <svg className="ml-[6px] h-[10px] w-[14px]" viewBox="0 0 14 10" fill="none" stroke="#333" strokeWidth="2">
            <path d="m1 8.500 6-7 6 7" />
          </svg>
        </div>
        <div className="flex h-[28px] items-center text-[21px]">
          <Fit className="w-[86px]">创业板指</Fit>
          <Fit className="ml-[7px] w-[66px] tracking-[.04em] text-[#06ac5b]">-1.49%</Fit>
        </div>
      </div>
      {["融买", "融卖", "撤单"].map((label) => (
        <div
          key={label}
          className="mt-[18px] flex h-[59px] w-[158px] items-center justify-center border-l border-[#dcdce0] pr-[2px] text-[36px] font-medium"
        >
          {label}
        </div>
      ))}
      <div className="mt-[18px] flex h-[59px] w-[118px] flex-col items-center border-l border-[#dcdce0]">
        <svg className="-mt-[7px] h-[34px] w-[34px] shrink-0" viewBox="0 0 34 34" fill="#333">
          <circle cx="17" cy="17" r="15" fill="none" stroke="#333" strokeWidth="2.200" />
          <circle cx="10.500" cy="17" r="1.700" />
          <circle cx="17" cy="17" r="1.700" />
          <circle cx="23.500" cy="17" r="1.700" />
        </svg>
        <div className="mt-[6px] text-[20.500px] leading-7 text-[#666]">更多</div>
      </div>
    </footer>
  );
}

export default function App() {
  return (
    <div className={clsx("h-[1665px] w-[769px] overflow-hidden bg-white", FONT)}>
      <Header />
      <Stats />
      <Notice />
      <Tabs />
      <MaRow />
      <ChartArea />
      <Pills />
      <Sectors />
      <BottomBar />
    </div>
  );
}
